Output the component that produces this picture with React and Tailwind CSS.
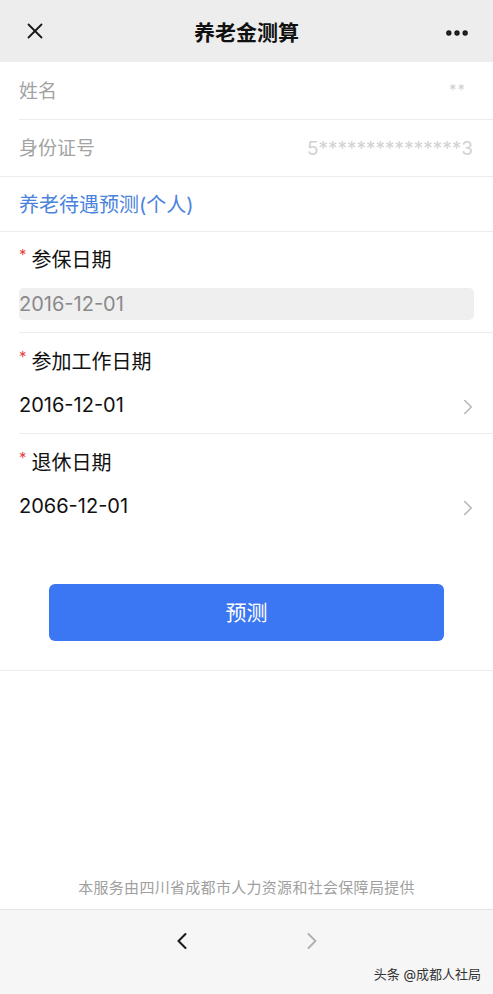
import { X, MoreHorizontal, ChevronRight, ChevronLeft } from 'lucide-react';

const font = { fontFamily: '"Inter", "Noto Sans CJK SC", sans-serif' };

function DateField({ label, value, disabled, first }) {
  return (
    <div className="pl-[19px]">
      <div className={`flex items-center pt-[3px] ${first ? 'h-[52px]' : 'h-[54px]'}`}>
        <span className="text-[#e64340] text-[15px] mr-[5px] mt-[-8px]">*</span>
        <span className="text-[20px] text-[#111]">{label}</span>
      </div>
      {disabled ? (
        <div className="pr-[19px] pt-[4px] pb-[12px]">
          <div className="h-[32px] rounded-[5px] bg-[#efefef] flex items-center text-[20px] text-[#8a8a8a]">
            {value}
          </div>
        </div>
      ) : (
        <div className="flex items-center justify-between h-[36px] pr-[12px] mb-[10px]">
          <span className="text-[20px] text-[#111]">{value}</span>
          <ChevronRight size={26} strokeWidth={1.5} className="text-[#b8b8b8] mt-[3px]" />
        </div>
      )}
    </div>
  );
}

export default function App() {
  return (
    <div style={font} className="w-[493px] h-[994px] bg-white flex flex-col overflow-hidden">
      <div className="h-[62px] bg-[#ededed] flex items-center shrink-0">
        <div className="w-[80px] pl-[22px] flex items-center">
          <X size={26} strokeWidth={1.7} className="text-[#1a1a1a]" />
        </div>
        <div className="flex-1 text-center text-[21px] font-bold text-[#111] pt-[4px]">养老金测算</div>
        <div className="w-[80px] pr-[22px] flex justify-end">
          <MoreHorizontal size={28} strokeWidth={2.6} className="text-[#1a1a1a] mt-[3px]" />
        </div>
      </div>

      <div className="pl-[19px]">
        <div className="flex items-center justify-between h-[58px] pt-[3px] pr-[27px] border-b border-[#ececec]">
          <span className="text-[19px] text-[#a3a3a3]">姓名</span>
          <span className="text-[15px] text-[#d0d0d0] tracking-[1px] mt-[-4px]">**</span>
        </div>
      </div>
      <div className="flex items-center justify-between h-[57px] pt-[2px] pl-[19px] pr-[20px] border-b border-[#ececec]">
        <span className="text-[19px] text-[#a3a3a3]">身份证号</span>
        <span className="text-[19px] text-[#d2d2d2]">5***************3</span>
      </div>
      <div className="flex items-center h-[55px] pt-[2px] pl-[19px] border-b border-[#ececec]">
        <span className="text-[20px] text-[#4a83dd]">养老待遇预测(个人)</span>
      </div>

      <DateField label="参保日期" value="2016-12-01" disabled first />
      <div className="ml-[19px] border-t border-[#ececec]" />
      <DateField label="参加工作日期" value="2016-12-01" />
      <div className="ml-[19px] border-t border-[#ececec]" />
      <DateField label="退休日期" value="2066-12-01" />

      <div className="pt-[50px] pb-[29px] flex justify-center border-b border-[#ececec]">
        <button className="w-[395px] h-[57px] rounded-[6px] bg-[#3b77f2] text-white text-[21px]">预测</button>
      </div>

      <div className="flex-1 flex items-end justify-center pb-[10px]">
        <span className="text-[15px] text-[#a0a0a0] tracking-[0.3px]">本服务由四川省成都市人力资源和社会保障局提供</span>
      </div>

      <div className="h-[85px] bg-[#f6f6f6] border-t border-[#e4e4e4] shrink-0 flex flex-col">
        <div className="flex justify-center gap-[102px] pt-[17px]">
          <ChevronLeft size={28} strokeWidth={1.8} className="text-[#1a1a1a]" />
          <ChevronRight size={28} strokeWidth={1.6} className="text-[#b0b0b0]" />
        </div>
        <div className="flex justify-end pr-[12px] mt-[10px]">
          <span className="text-[13px] text-[#333]">头条 @成都人社局</span>
        </div>
      </div>
    </div>
  );
}
